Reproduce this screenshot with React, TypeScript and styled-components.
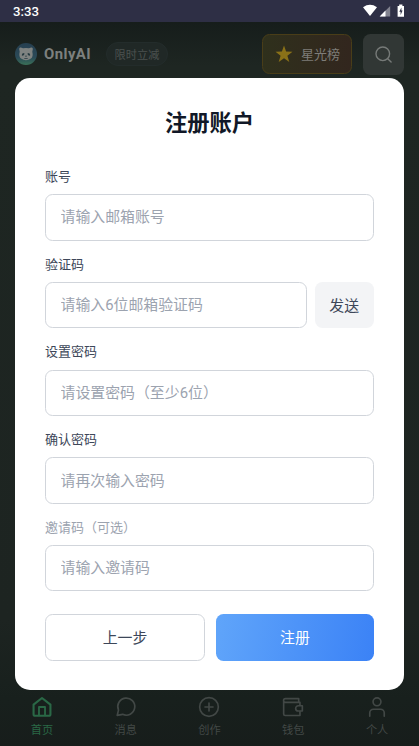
import React from 'react';
import styled, { createGlobalStyle } from 'styled-components';

const Global = createGlobalStyle`
  *, *::before, *::after { box-sizing: border-box; }
  body { margin: 0; overflow: hidden; }
  button, input { font: inherit; margin: 0; }
`;

const Screen = styled.div`
  position: relative;
  width: 419px;
  height: 746px;
  display: flex;
  flex-direction: column;
  overflow: hidden;
  font-family: Roboto, 'Noto Sans CJK SC', sans-serif;
  background: linear-gradient(180deg, #161d1b 22px, #1e2622 66px, #1d2421 620px, #18201d 700px, #171d1b 746px);
`;

const StatusBar = styled.div`
  height: 22px;
  flex: none;
  display: flex;
  align-items: center;
  justify-content: space-between;
  padding: 1px 13px 0;
  background: #2e2f45;
  color: #fff;
  font-size: 13.2px;
  font-weight: 500;
`;

const StatusIcons = styled.svg`
  width: 44px;
  height: 16px;
  display: block;
  margin-top: -1px;
`;

const Header = styled.header`
  height: 56px;
  flex: none;
  display: flex;
  align-items: center;
  padding: 8px 15px 0;
`;

const Logo = styled.svg`
  width: 22px;
  height: 22px;
  margin-right: 7px;
`;

const Brand = styled.span`
  width: 47px;
  font-size: 14.9px;
  font-weight: 700;
  letter-spacing: 0.45px;
  color: #7d807e;
  white-space: nowrap;
`;

const Tag = styled.span`
  height: 24px;
  width: 62px;
  margin-left: 15px;
  display: flex;
  align-items: center;
  justify-content: center;
  border: 1px solid #232c2b;
  border-radius: 12px;
  background: #202826;
  color: #4b514f;
  font-size: 11.2px;
`;

const RankButton = styled.button`
  width: 90px;
  height: 40px;
  margin-left: auto;
  padding: 0 0 1px 1px;
  display: flex;
  align-items: center;
  justify-content: center;
  gap: 8px;
  border: 1px solid #493d18;
  border-radius: 7.5px;
  background: linear-gradient(90deg, #2f301c, #32261e);
  color: #7e7d79;
  font-size: 13px;
  svg { margin-top: 1px; }
`;

const SearchButton = styled.button`
  width: 41px;
  height: 41px;
  margin-left: 11px;
  padding: 0;
  display: flex;
  align-items: center;
  justify-content: center;
  border: 0;
  border-radius: 7.5px;
  background: #313735;
  color: #767a78;
`;

const Modal = styled.main`
  position: absolute;
  left: 15px;
  top: 78px;
  width: 389px;
  height: 612px;
  padding: 30px 30px 29px;
  border-radius: 15px;
  background: #fff;
  color: #374151;
`;

const Title = styled.h1`
  margin: 0 0 27.7px;
  font-size: 22.3px;
  line-height: 30px;
  font-weight: 700;
  text-align: center;
  color: #111827;
`;

const Field = styled.label`
  display: block;
  height: 87.7px;
`;

const Label = styled.span<{ $muted?: boolean }>`
  display: block;
  height: 28.5px;
  padding-top: 1.3px;
  line-height: 19px;
  font-size: 13px;
  color: ${p => (p.$muted ? '#9ca3af' : '#3d4759')};
`;

const InputRow = styled.span`
  display: flex;
  gap: 7.5px;
`;

const Input = styled.input`
  flex: 1;
  min-width: 0;
  height: 46.5px;
  padding: 0 14.5px;
  border: 1px solid #d1d5db;
  border-radius: 7.5px;
  background: #fff;
  font-size: 14.9px;
  outline: none;
  &::placeholder { color: #9ca3af; opacity: 1; }
`;

const SendButton = styled.button`
  width: 59.5px;
  height: 46.5px;
  padding: 0 0 1px;
  border: 0;
  border-radius: 7.5px;
  background: #f3f4f6;
  color: #3d4759;
  font-size: 14.9px;
`;

const Actions = styled.div`
  display: flex;
  gap: 11px;
  margin-top: 9.9px;
`;

const ActionButton = styled.button<{ $primary?: boolean }>`
  flex: 1;
  height: 46.5px;
  padding: 0 0 2px;
  border: ${p => (p.$primary ? '0' : '1px solid #d1d5db')};
  border-radius: 7.5px;
  background: ${p => (p.$primary ? 'linear-gradient(100deg, #60a5fa, #3b82f6)' : '#fff')};
  color: ${p => (p.$primary ? '#fff' : '#3d4759')};
  font-size: 14.9px;
`;

const TabBar = styled.nav`
  height: 56px;
  margin-top: auto;
  flex: none;
  display: flex;
`;

const Tab = styled.div<{ $active?: boolean }>`
  flex: 1;
  display: flex;
  flex-direction: column;
  align-items: center;
  padding-top: 6px;
  color: ${p => (p.$active ? '#2a6846' : '#424846')};
  font-size: 11.2px;
  line-height: 16px;
  gap: 5px;
  svg { display: block; }
`;

const fields = [
  { label: '账号', placeholder: '请输入邮箱账号' },
  { label: '验证码', placeholder: '请输入6位邮箱验证码', send: true },
  { label: '设置密码', placeholder: '请设置密码（至少6位）' },
  { label: '确认密码', placeholder: '请再次输入密码' },
  { label: '邀请码（可选）', placeholder: '请输入邀请码', muted: true },
];

const tabs = [
  {
    label: '首页',
    icon: (
      <>
        <path d="M2.8 9.4 12 2.2l9.2 7.2v10.4a1.8 1.8 0 0 1-1.8 1.8H4.6a1.8 1.8 0 0 1-1.8-1.8Z" strokeWidth="2.3" />
        <path d="M8.7 21v-9h6.6v9" strokeWidth="2" />
      </>
    ),
  },
  {
    label: '消息',
    icon: <path d="M2.4 21.2l1.4-5.8A9.3 9.3 0 1 1 8.3 20Z" />,
  },
  {
    label: '创作',
    icon: (
      <>
        <circle cx="12" cy="12" r="10.2" />
        <path d="M12 7.6v8.8M7.6 12h8.8" />
      </>
    ),
  },
  {
    label: '钱包',
    icon: (
      <>
        <path d="M19.6 10V7H3.8a2 2 0 0 1 0-4.2h14.4V7M1.8 5v14.6c0 1 .7 1.7 1.7 1.7h16.1V17" />
        <path d="M22.2 10.6h-4.4a2.9 2.9 0 0 0 0 5.8h4.4Z" />
      </>
    ),
  },
  {
    label: '个人',
    icon: (
      <>
        <circle cx="12" cy="6.3" r="4.3" />
        <path d="M4.1 22v-3.6a4 4 0 0 1 4-4h7.8a4 4 0 0 1 4 4V22" />
      </>
    ),
  },
];

export default function App() {
  return (
    <>
      <Global />
      <Screen>
        <StatusBar>
          <span>3:33</span>
          <StatusIcons viewBox="0 0 44 16" fill="#fff">
            <path d="M1 4.2Q8 -.6 15 4.2L8 13Z" />
            <path d="M28.2 2.9v10.5H17.7Z" opacity=".4" />
            <path d="M23.5 7.6v5.8h-5.8Z" />
            <path fillRule="evenodd" d="M35.6 2.9h1.6V1.4h3.2v1.5H42v10.9h-6.4ZM39.4 4.4 37.3 8.8h1.3v3.2l2-4.6h-1.2Z" />
          </StatusIcons>
        </StatusBar>

        <Header>
          <Logo viewBox="0 0 22 22">
            <defs>
              <linearGradient id="logo" x1="0" y1="0" x2="0" y2="1">
                <stop offset="0" stopColor="#263f50" />
                <stop offset=".65" stopColor="#2b4a58" />
                <stop offset="1" stopColor="#3a7157" />
              </linearGradient>
            </defs>
            <circle cx="11" cy="11" r="11" fill="url(#logo)" />
            <path d="M4.2 6.2Q3.9 4.4 5.8 4.6l2.2.7q3-.6 6 0l2.2-.7q1.9-.2 1.6 1.6l-.5 2.6q1.2 4.8-1.3 6.8Q11 18.8 6 15.6 3.5 13.6 4.7 8.8Z" fill="#7f8381" />
            <path d="M6.7 12.2q.2-2.2 2.4-2.2 1 1-.4 2.3-1.1.9-2 0ZM15.3 12.2q-.2-2.2-2.4-2.2-1 1 .4 2.3 1.1.9 2 0Z" fill="#263a40" />
            <path d="M9.8 12.8h2.4L11 14ZM9.3 15h3.4v.7H9.3Z" fill="#263a40" />
          </Logo>
          <Brand>OnlyAI</Brand>
          <Tag>限时立减</Tag>
          <RankButton>
            <svg width="18" height="18" viewBox="0 0 18 18" fill="#8a7118">
              <path d="m9 .4 2.1 6.2 6.4.1-5.1 4 1.9 6.3L9 13.3 3.7 17l1.9-6.3-5.1-4 6.4-.1Z" />
            </svg>
            星光榜
          </RankButton>
          <SearchButton>
            <svg width="17" height="17" viewBox="0 0 17 17" fill="none" stroke="currentColor" strokeWidth="1.4" strokeLinecap="round">
              <circle cx="7.8" cy="7.8" r="6.8" />
              <path d="m12.7 12.7 3.4 3.4" />
            </svg>
          </SearchButton>
        </Header>

        <TabBar>
          {tabs.map((tab, i) => (
            <Tab key={tab.label} $active={i === 0}>
              <svg width="22" height="22" viewBox="0 0 24 24" fill="none" stroke="currentColor" strokeWidth="1.8" strokeLinejoin="round" strokeLinecap="round">
                {tab.icon}
              </svg>
              {tab.label}
            </Tab>
          ))}
        </TabBar>

        <Modal>
          <Title>注册账户</Title>
          {fields.map(field => (
            <Field key={field.label}>
              <Label $muted={field.muted}>{field.label}</Label>
              <InputRow>
                <Input placeholder={field.placeholder} />
                {field.send && <SendButton type="button">发送</SendButton>}
              </InputRow>
            </Field>
          ))}
          <Actions>
            <ActionButton type="button">上一步</ActionButton>
            <ActionButton type="button" $primary>注册</ActionButton>
          </Actions>
        </Modal>
      </Screen>
    </>
  );
}
